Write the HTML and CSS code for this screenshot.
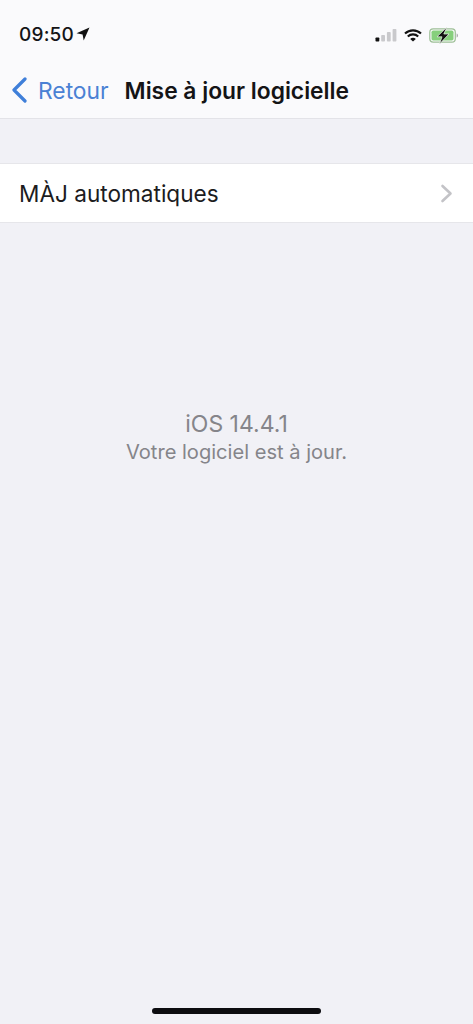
FILE: index.html
```html
<!DOCTYPE html>
<html lang="fr">
<head>
<meta charset="utf-8">
<title>Mise à jour logicielle</title>
<link rel="stylesheet" href="styles.css">
</head>
<body>
<div class="screen">
  <header class="top">
    <div class="status">
      <div class="status-left">
        <span class="time">09:50</span>
        <svg class="loc" width="14" height="14" viewBox="0 0 14 14"><path d="M13.500 .5 .5 6.300 6.600 7.400 7.700 13.500z" fill="#111"/></svg>
      </div>
      <div class="status-right">
        <svg width="22" height="14" viewBox="0 0 22 14"><rect x=".5" y="9.500" width="3.800" height="4" rx=".8" fill="#111"/><rect x="6.200" y="7" width="3.800" height="6.500" rx=".8" fill="#c9c9cc"/><rect x="11.900" y="4" width="3.800" height="9.500" rx=".8" fill="#c9c9cc"/><rect x="17.600" y="1" width="3.800" height="12.500" rx=".8" fill="#c9c9cc"/></svg>
        <svg width="18" height="13" viewBox="0 0 18 13"><path d="M1 4.600a11.500 11.500 0 0 1 16 0M3.800 7.500a7.500 7.500 0 0 1 10.400 0" fill="none" stroke="#111" stroke-width="2.100"/><path d="M6.200 9.900a3.900 3.900 0 0 1 5.600 0L9 12.600z" fill="#111"/></svg>
        <svg width="30" height="17" viewBox="0 0 30 17"><rect x=".8" y="1.800" width="25.500" height="13.400" rx="3.400" fill="none" stroke="#9dbf96" stroke-width="1.200"/><rect x="2.500" y="3.500" width="22" height="10" rx="1.800" fill="#86cf7c"/><path d="M27.600 6.500v4c.9-.3 1.400-1 1.400-2s-.5-1.700-1.400-2z" fill="#a9a9ac"/><path d="M18 0 8 9.800h5l-2.500 7.200 9.500-10h-5.200z" fill="#111" stroke="#f2f7f0" stroke-width=".7"/></svg>
      </div>
    </div>
    <nav class="nav">
      <a class="back">
        <svg width="18" height="26" viewBox="0 0 18 26"><path d="M15 2 4 13l11 11" fill="none" stroke="#3f7fd9" stroke-width="3.200" stroke-linecap="round" stroke-linejoin="round"/></svg>
        <span>Retour</span>
      </a>
      <h1 class="title">Mise à jour logicielle</h1>
    </nav>
  </header>

  <main class="content">
    <div class="cell">
      <span>MÀJ automatiques</span>
      <svg width="13" height="19" viewBox="0 0 13 19"><path d="M2.500 2 10.500 9.500 2.500 17" fill="none" stroke="#c3c3c7" stroke-width="2.600" stroke-linecap="round" stroke-linejoin="round"/></svg>
    </div>
    <div class="info">
      <p class="version">iOS 14.4.1</p>
      <p class="message">Votre logiciel est à jour.</p>
    </div>
  </main>

  <div class="home-bar"></div>
</div>
</body>
</html>
```
FILE: styles.css
```css
* { box-sizing: border-box; }
html, body { margin: 0; padding: 0; }
body { font-family: Inter, "Liberation Sans", sans-serif; background: #f1f1f6; }

.screen {
  width: 473px;
  height: 1024px;
  display: flex;
  flex-direction: column;
  overflow: hidden;
  background: #f1f1f6;
}

.top {
  height: 119px;
  flex: none;
  background: #fafafc;
  border-bottom: 1px solid #e3e3e8;
}

.status {
  height: 68px;
  padding: 20px 14px 0 19px;
  display: flex;
  justify-content: space-between;
  align-items: flex-start;
}
.status-left { display: flex; align-items: center; gap: 2px; height: 28px; }
.time { font-size: 19px; font-weight: 500; color: #141416; letter-spacing: .2px; }
.status-right { display: flex; align-items: center; gap: 7px; height: 30px; }

.nav { display: flex; align-items: center; height: 44px; padding-left: 10px; }
.back { display: flex; align-items: center; gap: 10px; color: #4a81d4; font-size: 22.800px; }
.title {
  margin: 0 0 0 16px;
  font-size: 22.800px;
  font-weight: 600;
  color: #141416;
}

.content { flex: 1; padding-top: 44px; }

.cell {
  height: 60px;
  padding: 0 20px 0 19px;
  display: flex;
  align-items: center;
  justify-content: space-between;
  background: #fff;
  border-top: 1px solid #e6e6ea;
  border-bottom: 1px solid #e6e6ea;
  font-size: 22.600px;
  color: #1c1c1e;
}

.info { margin-top: 187px; text-align: center; color: #85858a; }
.info p { margin: 0; }
.version { font-size: 23px; line-height: 28px; }
.message { font-size: 20.100px; line-height: 28px; }

.home-bar {
  flex: none;
  width: 169px;
  height: 6px;
  margin: 0 auto 10px;
  border-radius: 3px;
  background: #0c0c10;
}
```
